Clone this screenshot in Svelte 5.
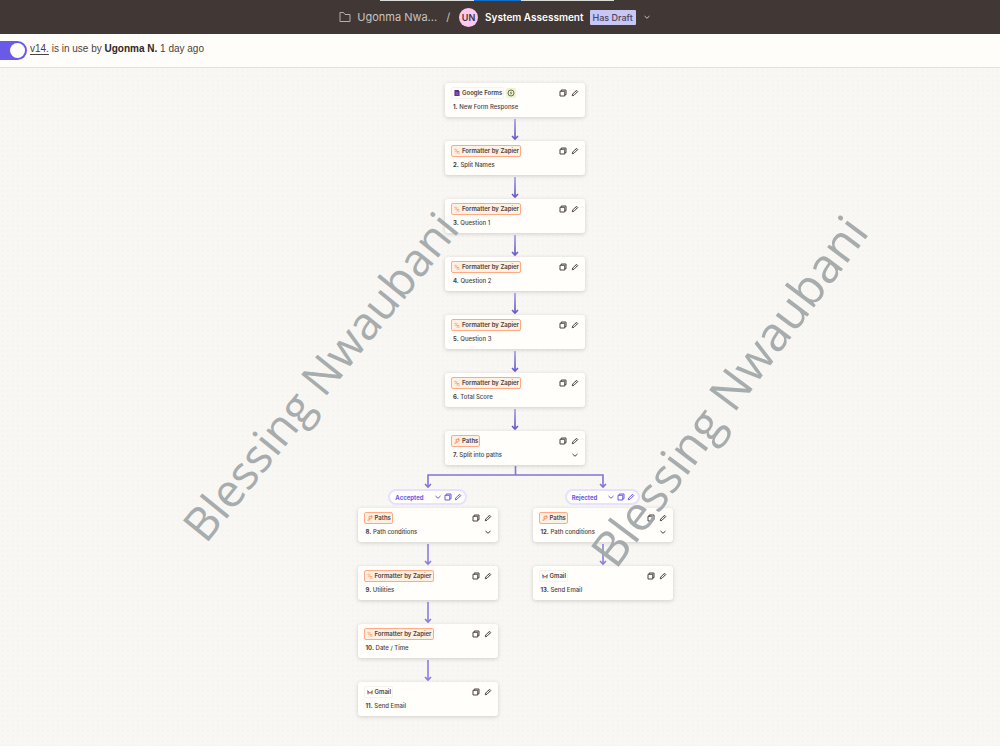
<script>
	const mainSteps = [
		{ id: 1, app: 'forms', title: 'New Form Response', trigger: true },
		{ id: 2, app: 'formatter', title: 'Split Names' },
		{ id: 3, app: 'formatter', title: 'Question 1' },
		{ id: 4, app: 'formatter', title: 'Question 2' },
		{ id: 5, app: 'formatter', title: 'Question 3' },
		{ id: 6, app: 'formatter', title: 'Total Score' },
		{ id: 7, app: 'paths', title: 'Split into paths', expandable: true }
	];

	const branches = [
		{
			name: 'Accepted',
			steps: [
				{ id: 8, app: 'paths', title: 'Path conditions', expandable: true },
				{ id: 9, app: 'formatter', title: 'Utilities' },
				{ id: 10, app: 'formatter', title: 'Date / Time' },
				{ id: 11, app: 'gmail', title: 'Send Email' }
			]
		},
		{
			name: 'Rejected',
			steps: [
				{ id: 12, app: 'paths', title: 'Path conditions', expandable: true },
				{ id: 13, app: 'gmail', title: 'Send Email' }
			]
		}
	];

	const appNames = {
		forms: 'Google Forms',
		formatter: 'Formatter by Zapier',
		paths: 'Paths',
		gmail: 'Gmail'
	};

	let enabled = $state(true);
</script>

{#snippet copyIcon()}
	<svg class="icon" viewBox="0 0 16 16" aria-hidden="true">
		<path d="M2 4.5h9.5V14H2z M4.5 4.5V2H14v9.5h-2.5" />
	</svg>
{/snippet}

{#snippet pencilIcon()}
	<svg class="icon" viewBox="0 0 16 16" aria-hidden="true">
		<path d="M2.5 13.5l1-3.5L11 2.5l2.5 2.5L6 12.5z M9 4.5l2.5 2.5" />
	</svg>
{/snippet}

{#snippet chevronIcon()}
	<svg class="icon" viewBox="0 0 16 16" aria-hidden="true">
		<path d="M3 6l5 4.5L13 6" />
	</svg>
{/snippet}

{#snippet appIcon(app)}
	<svg class="app-icon" viewBox="0 0 14 14" aria-hidden="true">
		{#if app === 'forms'}
			<path d="M1 0h8l4 3v11H1z" fill="#6a2c9c" />
			<path d="M9 0l4 3H9z" fill="#3f1767" />
			<path d="M4 7h6M4 10h6" stroke="#c9a9e2" stroke-width="1" />
		{:else if app === 'formatter'}
			<path
				d="M1 4c3-3 4 2 7 0M2 8c3-3 6 2 10 0M6 12c2-2 4 1 7 0"
				fill="none"
				stroke="#ff8a5c"
				stroke-width="1.8"
			/>
		{:else if app === 'paths'}
			<path
				d="M1 12h4V3h5M5 9h3c3 0 4-3 4-6M9 1l3 2-3 2"
				fill="none"
				stroke="#ff7a48"
				stroke-width="1.8"
			/>
		{:else}
			<path d="M1 12V3l3 2v7z" fill="#4285f4" />
			<path d="M1 3l6 5 6-5v3l-6 5-6-5z" fill="#ea4335" />
			<path d="M10 5l3-2v9h-3z" fill="#34a853" />
		{/if}
	</svg>
{/snippet}

{#snippet connector()}
	<svg class="connector" viewBox="0 0 10 24" aria-hidden="true">
		<path class="shaft" d="M5 2v20" />
		<path d="M2 19l3 3 3-3" />
	</svg>
{/snippet}

{#snippet stepCard(step)}
	<article class="card">
		<div class="card-row">
			<span class="chip {step.app}">
				{@render appIcon(step.app)}
				{appNames[step.app]}
			</span>
			{#if step.trigger}
				<span class="trigger">
					<svg viewBox="0 0 16 16" aria-hidden="true">
						<circle cx="8" cy="8" r="6" fill="none" stroke="#4c5330" stroke-width="1.6" />
						<path d="M9 4L5.500 8.500H8L7 12l3.500-4.500H8z" fill="#4c5330" />
					</svg>
				</span>
			{/if}
			<div class="actions">
				<button aria-label="Copy step {step.id}">{@render copyIcon()}</button>
				<button aria-label="Rename step {step.id}">{@render pencilIcon()}</button>
			</div>
		</div>
		<div class="card-row title-row">
			<p class="title"><strong>{step.id}.</strong> {step.title}</p>
			{#if step.expandable}
				<button aria-label="Expand step {step.id}">{@render chevronIcon()}</button>
			{/if}
		</div>
	</article>
{/snippet}

<div class="editor">
	<header class="top-bar">
		<div class="tab-strip"><span></span></div>
		<svg class="folder" viewBox="0 0 12 12" aria-hidden="true">
			<path d="M1 1.500h3.500l1.500 2h5v7H1z" />
		</svg>
		<a class="folder-link" href="#folder">Ugonma Nwa...</a>
		<span class="slash">/</span>
		<span class="avatar">UN</span>
		<h1>System Assessment</h1>
		<span class="badge">Has Draft</span>
		<button class="menu" aria-label="Zap menu">{@render chevronIcon()}</button>
	</header>

	<div class="status-bar">
		<input type="checkbox" class="toggle" aria-label="Zap is on" bind:checked={enabled} />
		<p>
			<a href="#v14">v14.</a> is in use by <strong>Ugonma N.</strong> 1 day ago
		</p>
	</div>

	<main class="canvas">
		<div class="flow">
			{#each mainSteps as step, i (step.id)}
				{#if i > 0}
					{@render connector()}
				{/if}
				{@render stepCard(step)}
			{/each}

			<svg class="fork" viewBox="0 0 185 24" aria-hidden="true">
				<defs>
					<!-- shared by every connector shaft -->
					<linearGradient id="shaft" gradientUnits="userSpaceOnUse" x1="0" y1="0" x2="0" y2="22">
						<stop offset="0" stop-color="#a9a0ee" />
						<stop offset="1" stop-color="#5747c4" />
					</linearGradient>
				</defs>
				<path d="M92.500 1v9M5 22V10h175v12" />
				<path d="M2 19l3 3 3-3M177 19l3 3 3-3" />
			</svg>

			<div class="branches">
				{#each branches as branch (branch.name)}
					<section class="branch">
						<div class="pill">
							<span>{branch.name}</span>
							<div class="actions">
								<button aria-label="Collapse {branch.name}">{@render chevronIcon()}</button>
								<button aria-label="Copy {branch.name}">{@render copyIcon()}</button>
								<button aria-label="Rename {branch.name}">{@render pencilIcon()}</button>
							</div>
						</div>
						{#each branch.steps as step, i (step.id)}
							{#if i > 0}
								{@render connector()}
							{/if}
							{@render stepCard(step)}
						{/each}
					</section>
				{/each}
			</div>
		</div>

		<span class="watermark first">Blessing Nwaubani</span>
		<span class="watermark second">Blessing Nwaubani</span>
	</main>
</div>

<style>
	:global(body) {
		margin: 0;
		background: #fefefe;
	}

	.editor {
		font-family: Inter, 'Liberation Sans', sans-serif;
		color: #4a4240;
		overflow: hidden;
	}

	p,
	h1 {
		margin: 0;
	}

	button {
		display: flex;
		padding: 0;
		border: 0;
		background: none;
		color: inherit;
		cursor: pointer;
	}

	.icon {
		display: block;
		width: 8px;
		height: 8px;
		fill: none;
		stroke: currentColor;
		stroke-width: 2;
	}

	/* TOP BAR */
	.top-bar {
		position: relative;
		display: flex;
		align-items: center;
		justify-content: center;
		height: 34px;
		padding-right: 10px;
		box-sizing: border-box;
		background: #413735;
		color: #c8c3c0;
		font-size: 11px;
	}

	.tab-strip {
		position: absolute;
		top: 0;
		left: 38%;
		width: 234px;
		height: 1px;
		background: #dcdcd8;
	}

	.tab-strip span {
		display: block;
		width: 47px;
		height: 1px;
		margin: 0 auto;
		background: #0f6fc9;
	}

	.folder {
		width: 12px;
		height: 12px;
		margin-right: 6px;
		fill: none;
		stroke: #b5aeab;
		stroke-width: 1;
	}

	.folder-link {
		color: inherit;
		text-decoration: none;
	}

	.slash {
		margin: 0 9px;
	}

	.avatar {
		width: 19px;
		height: 19px;
		border-radius: 50%;
		background: #fcc8ef;
		color: #3d3432;
		font-size: 9px;
		font-weight: 600;
		line-height: 19px;
		text-align: center;
	}

	h1 {
		margin: 0 6px 0 7px;
		color: #fffdf9;
		font-size: 10px;
		font-weight: 600;
	}

	.badge {
		padding: 0 3px;
		border-radius: 1px;
		background: #c8c7f4;
		color: #494469;
		font-size: 9px;
		font-weight: 500;
		line-height: 15px;
	}

	.menu {
		margin-left: 7px;
	}

	/* STATUS BAR */
	.status-bar {
		display: flex;
		align-items: center;
		gap: 3px;
		height: 33px;
		border-bottom: 1px solid #e3e1dc;
		background: #fffdf9;
		font-family: 'Liberation Sans', Arial, sans-serif;
		font-size: 10px;
	}

	.status-bar p {
		padding-bottom: 4px;
	}

	.status-bar a {
		color: inherit;
		text-underline-offset: 2px;
	}

	.status-bar strong {
		color: #2f2725;
	}

	.toggle {
		display: flex;
		justify-content: flex-end;
		width: 36px;
		height: 19px;
		margin: 0 0 0 -9px;
		padding: 2px;
		box-sizing: border-box;
		appearance: none;
		border-radius: 10px;
		background: #695be8;
	}

	.toggle::before {
		content: '';
		width: 15px;
		height: 15px;
		border-radius: 50%;
		background: #fffdf9;
	}

	.toggle:not(:checked) {
		justify-content: flex-start;
		background: #95928e;
	}

	/* CANVAS */
	.canvas {
		position: relative;
		padding: 15px 0 30px 30px;
		background: #f8f7f4 radial-gradient(circle, #f4f3ef 1px, transparent 1px) 0 0 / 5px 5px;
	}

	.flow,
	.branch {
		display: flex;
		flex-direction: column;
		align-items: center;
	}

	.card {
		display: flex;
		flex-direction: column;
		gap: 4px;
		width: 140px;
		padding: 4px 6px 6px;
		box-sizing: border-box;
		border-radius: 3px;
		background: #fffefb;
		box-shadow: 0 1px 4px rgba(60, 50, 40, 0.2);
		font-size: 6px;
		line-height: 8px;
	}

	.card-row {
		display: flex;
		align-items: center;
		height: 12px;
	}

	.title-row {
		justify-content: space-between;
		height: 8px;
		padding-left: 2px;
	}

	.title {
		font-weight: 500;
	}

	.chip {
		display: flex;
		align-items: center;
		gap: 2px;
		height: 12px;
		padding: 0 1px 0 2px;
		box-sizing: border-box;
		border: 1px solid #ffa985;
		border-radius: 2px;
		background: #fff0e4;
		font-weight: 600;
	}

	.chip.forms,
	.chip.gmail {
		border-color: #f5f3ef;
		background: #fffefb;
	}

	.app-icon {
		width: 6px;
		height: 6px;
	}

	.trigger {
		display: flex;
		margin-left: 2px;
		padding: 1px;
		border-radius: 2px;
		background: #eef3cf;
	}

	.trigger svg {
		width: 8px;
		height: 8px;
	}

	.actions {
		display: flex;
		gap: 4px;
		margin-left: auto;
	}

	.connector {
		width: 10px;
		height: 24px;
	}

	.connector path,
	.fork path {
		fill: none;
		stroke: #6b5bd0;
		stroke-width: 1.6;
	}

	.connector .shaft {
		stroke: url(#shaft);
	}

	.branch .connector path {
		stroke: #8a7de0;
	}

	.fork {
		width: 185px;
		height: 24px;
	}

	.fork path {
		stroke: #8274d8;
	}

	.branches {
		display: flex;
		align-items: flex-start;
		gap: 35px;
	}

	.pill {
		display: flex;
		align-items: center;
		gap: 10px;
		height: 16px;
		margin-bottom: 3px;
		padding: 0 3px 0 5px;
		box-sizing: border-box;
		border: 2px solid #e6e2fb;
		border-radius: 8px;
		background: #fffefb;
		color: #695be8;
		font-size: 6px;
		font-weight: 700;
	}

	.pill .actions {
		gap: 2px;
	}

	/* WATERMARKS RUN UP ACROSS THE CANVAS */
	.watermark {
		position: absolute;
		color: #a3a8aa;
		font-family: 'Open Sans', 'Noto Sans', sans-serif;
		font-size: 46px;
		line-height: 60px;
		white-space: nowrap;
		opacity: 0.95;
		pointer-events: none;
		transform-origin: 0 47px;
	}

	.first {
		top: 429px;
		left: calc(50% - 295px);
		transform: rotate(-51deg);
	}

	.second {
		top: 455px;
		left: calc(50% + 115px);
		font-size: 48px;
		transform: rotate(-53deg);
	}
</style>
